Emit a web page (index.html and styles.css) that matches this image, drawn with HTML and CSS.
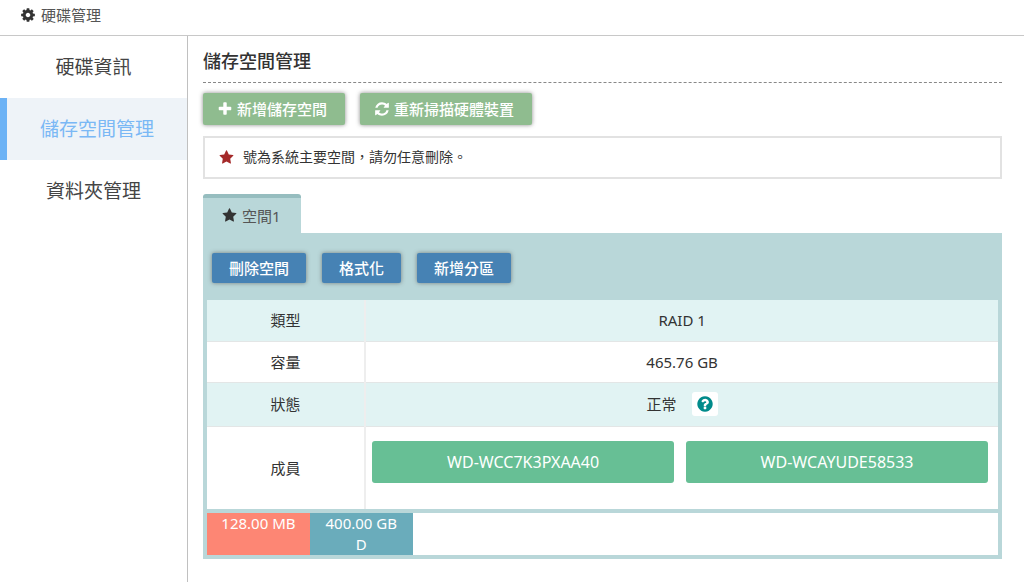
FILE: index.html
```html
<!DOCTYPE html>
<html lang="zh-Hant">
<head>
<meta charset="utf-8">
<title>硬碟管理</title>
<link rel="stylesheet" href="styles.css">
</head>
<body>
<svg class="sprite" aria-hidden="true">
  <symbol id="cog" viewBox="0 0 1792 1792"><path d="M1152 896q0-106-75-181t-181-75-181 75-75 181 75 181 181 75 181-75 75-181zm512-109v222q0 12-8 23t-20 13l-185 28q-19 54-39 91 35 50 107 138 10 12 10 25t-9 23q-27 37-99 108t-94 71q-12 0-26-9l-138-108q-44 23-91 38-16 136-29 186-7 28-36 28h-222q-14 0-24.5-8.5t-11.5-21.5l-28-184q-49-16-90-37l-141 107q-10 9-25 9-14 0-25-11-126-114-165-168-7-10-7-23 0-12 8-23 15-21 51-66.5t54-70.5q-27-50-41-99l-183-27q-13-2-21-12.5t-8-23.5v-222q0-12 8-23t19-13l186-28q14-46 39-92-40-57-107-138-10-12-10-24 0-10 9-23 26-36 98.5-107.5t94.5-71.5q13 0 26 10l138 107q44-23 91-38 16-136 29-186 7-28 36-28h222q14 0 24.5 8.5t11.5 21.5l28 184q49 16 90 37l142-107q9-9 24-9 13 0 25 10 129 119 165 170 7 8 7 22 0 12-8 23-15 21-51 66.5t-54 70.5q26 50 41 98l183 28q13 2 21 12.5t8 23.5z"/></symbol>
  <symbol id="star" viewBox="0 0 1792 1792"><path d="M1728 647q0 22-26 48l-363 354 86 500q1 7 1 20 0 21-10.5 35.5t-30.5 14.5q-19 0-40-12l-449-236-449 236q-22 12-40 12-21 0-31.5-14.5t-10.5-35.5q0-6 2-20l86-500-364-354q-25-27-25-48 0-37 56-46l502-73 225-455q19-41 49-41t49 41l225 455 502 73q56 9 56 46z"/></symbol>
  <symbol id="plus" viewBox="0 0 1792 1792"><path d="M1600 736v192q0 40-28 68t-68 28h-416v416q0 40-28 68t-68 28h-192q-40 0-68-28t-28-68v-416h-416q-40 0-68-28t-28-68v-192q0-40 28-68t68-28h416v-416q0-40 28-68t68-28h192q40 0 68 28t28 68v416h416q40 0 68 28t28 68z"/></symbol>
  <symbol id="refresh" viewBox="0 0 1792 1792"><path d="M1639 1056q0 5-1 7-64 268-268 434.500t-478 166.500q-146 0-282.500-55t-243.500-157l-129 129q-19 19-45 19t-45-19-19-45v-448q0-26 19-45t45-19h448q26 0 45 19t19 45-19 45l-137 137q71 66 161 102t187 36q134 0 250-65t186-179q11-17 53-117 8-23 30-23h192q13 0 22.500 9.500t9.500 22.500zm25-800v448q0 26-19 45t-45 19h-448q-26 0-45-19t-19-45 19-45l138-138q-148-137-349-137-134 0-250 65t-186 179q-11 17-53 117-8 23-30 23h-199q-13 0-22.500-9.500t-9.500-22.500v-7q65-268 270-434.500t480-166.500q146 0 284 55.500t245 156.500l130-129q19-19 45-19t45 19 19 45z"/></symbol>
  <symbol id="question" viewBox="0 0 1792 1792"><path d="M1024 1376v-192q0-14-9-23t-23-9h-192q-14 0-23 9t-9 23v192q0 14 9 23t23 9h192q14 0 23-9t9-23zm256-672q0-88-55.500-163t-138.500-116-170-41q-243 0-371 213-15 24 8 42l132 100q7 6 19 6 16 0 25-12 53-68 86-92 34-24 86-24 48 0 85.500 26t37.500 59q0 38-20 61t-68 45q-63 28-115.500 86.500t-52.500 125.500v36q0 14 9 23t23 9h192q14 0 23-9t9-23q0-19 21.500-49.500t54.500-49.500q32-18 49-28.500t46-35 44.500-48 28-60.500 12.500-81zm384 192q0 209-103 385.500t-279.500 279.500-385.500 103-385.500-103-279.500-279.500-103-385.500 103-385.500 279.500-279.500 385.500-103 385.500 103 279.500 279.500 103 385.500z"/></symbol>
</svg>

<header class="topbar">
  <svg class="icon"><use href="#cog"/></svg>
  <span>硬碟管理</span>
</header>

<div class="layout">
  <nav class="sidebar">
    <a class="nav-item" href="#">硬碟資訊</a>
    <a class="nav-item active" href="#" aria-current="page">儲存空間管理</a>
    <a class="nav-item" href="#">資料夾管理</a>
  </nav>

  <main class="main">
    <h1 class="title">儲存空間管理</h1>
    <div class="actions">
      <button class="btn btn-green" type="button"><svg class="icon"><use href="#plus"/></svg>新增儲存空間</button>
      <button class="btn btn-green" type="button"><svg class="icon"><use href="#refresh"/></svg>重新掃描硬體裝置</button>
    </div>
    <p class="notice"><svg class="icon icon-star"><use href="#star"/></svg><span>號為系統主要空間，請勿任意刪除。</span></p>

    <button class="tab" type="button"><svg class="icon icon-star"><use href="#star"/></svg>空間1</button>
    <section class="panel">
      <div class="tools">
        <button class="btn btn-blue" type="button">刪除空間</button>
        <button class="btn btn-blue" type="button">格式化</button>
        <button class="btn btn-blue" type="button">新增分區</button>
      </div>
      <table class="info">
        <tr><th scope="row">類型</th><td>RAID 1</td></tr>
        <tr><th scope="row">容量</th><td>465.76 GB</td></tr>
        <tr class="status"><th scope="row">狀態</th><td><div class="state"><span>正常</span><button class="help" type="button" aria-label="說明"><svg class="icon"><use href="#question"/></svg></button></div></td></tr>
        <tr class="members"><th scope="row">成員</th><td>
          <div class="disks">
            <button class="disk" type="button">WD-WCC7K3PXAA40</button>
            <button class="disk" type="button">WD-WCAYUDE58533</button>
          </div>
        </td></tr>
      </table>
      <div class="partitions">
        <div class="part part-red" style="width:13%">128.00 MB</div>
        <div class="part part-teal" style="width:13%">400.00 GB<br>D</div>
      </div>
    </section>
  </main>
</div>
</body>
</html>
```

FILE: styles.css
```css
* { box-sizing: border-box; }

body {
  margin: 0;
  min-height: 100vh;
  display: flex;
  flex-direction: column;
  background: #fff;
  color: #333;
  font: 15px/20px "Noto Sans", "Noto Sans CJK TC", sans-serif;
}

button { font: inherit; border: 0; cursor: pointer; }

.sprite { display: none; }
.icon { width: 16px; height: 16px; fill: currentColor; flex: none; }
.icon-star { width: 15px; height: 15px; }

.topbar {
  display: flex;
  align-items: center;
  gap: 5px;
  height: 36px;
  padding: 0 20px 5px;
  border-bottom: 1px solid #c8c8c8;
}
.topbar span { color: #555; }

.layout { display: flex; flex: 1; }

.sidebar {
  width: 188px;
  flex: none;
  border-right: 1px solid #c0c0c0;
}
.nav-item {
  display: block;
  padding: 0 6px;
  font-size: 19px;
  line-height: 62px;
  text-align: center;
  color: #444;
  text-decoration: none;
}
.nav-item.active {
  padding: 0 2px;
  border-left: 7px solid #6cb2f5;
  background: #eef3f8;
  color: #7ab8f5;
}

.main { flex: 1; min-width: 0; padding: 12px 22px 22px 15px; }

.title {
  margin: 0 0 10px;
  padding-bottom: 8px;
  border-bottom: 1px dashed #888;
  font-size: 18px;
  font-weight: 500;
  line-height: 26px;
}

.actions { display: flex; gap: 15px; margin-bottom: 11px; }
.btn {
  display: flex;
  align-items: center;
  gap: 4px;
  padding: 0 17px;
  border-radius: 2px;
  box-shadow: 0 0 4px rgba(90, 90, 90, .7);
  color: #fff;
  font-weight: 500;
}
.btn-green { height: 32px; padding: 0 18px 1px 14px; background: #8fbc8f; }
.btn-blue { height: 30px; background: #4682b4; }

.notice {
  display: flex;
  align-items: center;
  gap: 9px;
  height: 43px;
  margin: 0 0 15px;
  padding: 0 14px 1px;
  border: 2px solid #e2e2e2;
  font-size: 14px;
}
.notice .icon { color: #a52a2a; }

.tab {
  display: flex;
  align-items: center;
  gap: 5px;
  height: 39px;
  padding: 0 20px 0 19px;
  border-top: 4px solid #96bdbf;
  border-radius: 3px 3px 0 0;
  background: #b9d7d9;
  color: #555;
}
.tab .icon { color: #333; }

.panel { padding: 0 4px 4px; background: #b9d7d9; }
.tools { display: flex; gap: 16px; padding: 20px 5px 17px; }

.info { width: 100%; border-collapse: collapse; table-layout: fixed; background: #fff; }
.info th, .info td {
  height: 41px;
  padding: 0;
  border-bottom: 1px solid #e3e6e6;
  font-weight: 400;
  text-align: center;
  color: #333;
}
.info th { width: 20%; border-right: 2px solid #eee; }
.info tr:nth-child(odd) { background: #e1f3f3; }
.info .status th, .info .status td { height: 44px; }
.info .members th, .info .members td { height: 83px; border-bottom: 0; }
.info .members td { padding: 14px 10px 0 6px; vertical-align: top; }

.state { display: flex; justify-content: center; align-items: center; gap: 15px; }
.help {
  display: flex;
  padding: 3px 4px;
  border-radius: 3px;
  background: #fff;
  color: #008b8b;
}
.help .icon { width: 18px; height: 18px; }

.disks { display: flex; gap: 12px; }
.disk {
  flex: 1;
  height: 42px;
  border-radius: 3px;
  background: #67bf95;
  color: #fff;
  font-size: 16px;
}

.partitions { display: flex; height: 42px; margin-top: 4px; background: #fff; }
.part { color: #fff; text-align: center; line-height: 21px; }
.part-red { background: #fd8674; }
.part-teal { background: #6aacbb; }
```
